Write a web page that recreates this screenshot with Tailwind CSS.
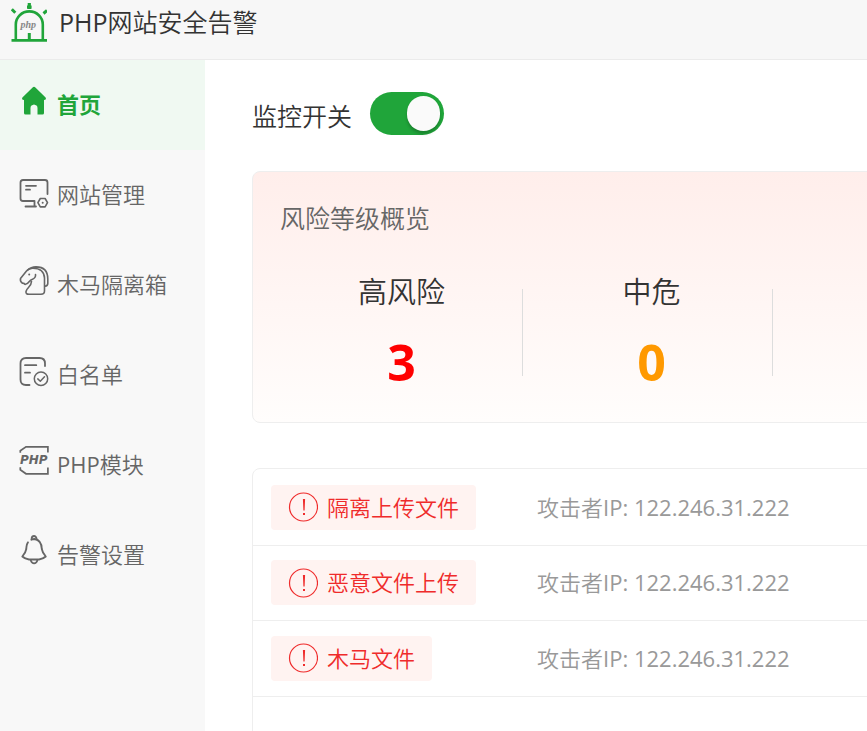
<!DOCTYPE html>
<html lang="zh-CN">
<head>
  <meta charset="UTF-8" />
  <meta name="viewport" content="width=device-width, initial-scale=1.0" />
  <title>PHP网站安全告警</title>
  <script src="https://cdn.jsdelivr.net/npm/@tailwindcss/browser@4"></script>
</head>
<body class="flex flex-col h-screen overflow-hidden bg-white text-[#333] font-[350] font-['Open_Sans','Noto_Sans_CJK_SC',sans-serif]">

  <header class="flex items-center gap-3 h-[60px] shrink-0 pl-[11px] pb-4 bg-[#f7f7f7] border-b border-[#ebebeb]">
    <svg class="w-9 h-10 shrink-0" viewBox="0 0 36 40" fill="none" stroke="#20a53a">
      <path stroke-width="2.600" d="M4.800 38V22.500a13.400 13 0 0 1 27 0V38" />
      <path stroke-width="2.800" d="M0.500 38.300H36" />
      <path stroke-width="3" d="M18.300 31v8" />
      <path stroke-width="3.200" d="M18.300 1v6M16 5.200h4.600" />
      <path stroke-width="3" d="M.8 7.300l3.500 3.500M36 8.500l-3.500 3" />
      <text x="9.500" y="26" font-family="Liberation Serif" font-style="italic" font-weight="bold" font-size="10" fill="#888" stroke="none">php</text>
    </svg>
    <h1 class="text-[25px] leading-9"><span class="font-normal">PHP</span>网站安全告警</h1>
  </header>

  <div class="flex flex-1 min-h-0">
    <nav class="w-[205px] shrink-0 bg-[#f8f8f8] text-[22px] text-[#666]">
      <a href="#" class="flex items-center gap-2 h-[90px] pl-[19px] pb-0.5 bg-[#f0f9f2] text-[#20a53a] font-bold">
        <svg class="w-[30px] h-[30px] mb-2" viewBox="0 0 30 30" fill="currentColor">
          <path d="M13.600 2.400q1.400-1.300 2.800 0L26.600 12.600q1.200 2.400-1.600 2.400V28q0 1.500-1.500 1.500H18.500V23q0-2-1-2.600l-2.500-1-2.500 1q-1 .6-1 2.600v6.500H6.500Q5 29.500 5 28V15Q2.200 15 3.400 12.600z" />
        </svg>
        <span>首页</span>
      </a>
      <a href="#" class="flex items-center gap-2 h-[90px] pl-[19px] pb-0.5">
        <svg class="w-[30px] h-[30px] mb-2 overflow-visible" viewBox="0 0 30 30" fill="none" stroke="currentColor" stroke-width="1.800" stroke-linecap="round" stroke-linejoin="round">
          <path d="M28.500 19V7.500q0-2.500-2.500-2.500H4q-2.500 0-2.500 2.500V23.500q0 2.500 2.500 2.500H15.500V31" />
          <path d="M6.500 31.500h10.500M7 10.800h10M7 14.700h4" />
          <path stroke-width="1.600" d="M21.300 23.500h4.800l2.400 4.200-2.400 4.200h-4.800l-2.400-4.200z" />
          <circle cx="23.700" cy="27.700" r="1" fill="currentColor" stroke="none" />
        </svg>
        <span>网站管理</span>
      </a>
      <a href="#" class="flex items-center gap-2 h-[90px] pl-[19px] pb-0.5">
        <svg class="w-[30px] h-[30px] mb-2 overflow-visible" viewBox="0 -1 30 30" fill="none" stroke="currentColor" stroke-width="1.600" stroke-linecap="round" stroke-linejoin="round">
          <path d="M16.500 8.500q.5 3-3 4.800Q11.500 14 10.300 15.500Q8.500 18 6.500 18.300Q5.500 18.500 5 17.400L3.500 17.200Q.8 15.500 1.500 12.500L7.500 5Q10 2.300 13.500 2.200Q25 2 25.500 12V25q0 3.300-3.500 3.300H10Q6.500 28.300 7 25.500Q7.500 23.500 9.500 21.500Q12.300 19 12.500 15.500" />
          <path d="M8.500 4Q12 1 17 .9Q28.800 1 28.800 13V17.500q0 2.300-2.800 2.800" />
          <circle cx="10.200" cy="8.600" r="1" fill="currentColor" stroke="none" />
        </svg>
        <span>木马隔离箱</span>
      </a>
      <a href="#" class="flex items-center gap-2 h-[90px] pl-[19px] pb-0.5">
        <svg class="w-[30px] h-[30px] mb-2 overflow-visible" viewBox="0 0 30 30" fill="none" stroke="currentColor" stroke-width="1.800" stroke-linecap="round" stroke-linejoin="round">
          <path d="M26 11V8.500Q26 3 20.500 3H7Q1.500 3 1.500 8.500V24.500Q1.500 30 7 30H10.500" />
          <path d="M6 10.200h11.300M6 17.700h5" />
          <circle cx="22" cy="23.700" r="6.700" stroke-width="1.500" />
          <path stroke-width="1.500" d="M18.800 23.900l2.500 2.300 4.200-4.500" />
        </svg>
        <span>白名单</span>
      </a>
      <a href="#" class="flex items-center gap-2 h-[90px] pl-[19px] pb-0.5">
        <svg class="w-[30px] h-[30px] mb-2 overflow-visible" viewBox="0 -1 30 30" fill="none" stroke="currentColor" stroke-width="1.700">
          <path d="M1.300 6.800V4.800L7 .9H28.900V6.500M1.300 21.300V23.800L7 27.800H28.900V21.500" />
          <text x="1" y="18" font-family="DejaVu Sans" font-weight="bold" font-style="italic" font-size="12" fill="currentColor" stroke="none">PHP</text>
        </svg>
        <span><span class="font-normal">PHP</span>模块</span>
      </a>
      <a href="#" class="flex items-center gap-2 h-[90px] pl-[19px] pb-0.5">
        <svg class="w-[30px] h-[30px] mb-2" viewBox="0 0 30 30" fill="none" stroke="currentColor" stroke-width="1.800" stroke-linecap="round" stroke-linejoin="round">
          <path d="M9 7.300Q7.500 9 7.300 14Q6.800 17.500 3.300 21.500Q6 24 10 24.500H20Q24 24 26.800 21.500Q23.300 17.500 22.800 14Q22.500 5 15.500 4Q13.500 4 12.300 4.800" />
          <path d="M12.600 3.500Q13 1 15 1t2.600 2.800M11.800 25.500q1 2.800 3.300 2.800t3.200-2.800" />
        </svg>
        <span>告警设置</span>
      </a>
    </nav>

    <main class="flex-1 min-w-0 overflow-hidden pl-[47px] pt-8">
      <div class="flex items-center gap-[18px]">
        <label for="monitor" class="pt-1 text-[25px] leading-9">监控开关</label>
        <input type="checkbox" id="monitor" role="switch" checked class="appearance-none flex items-center justify-start w-[74px] h-[43px] px-1 rounded-full bg-[#ddd] cursor-pointer checked:justify-end checked:bg-[#20a53a] before:content-[''] before:w-[33px] before:h-[35px] before:rounded-full before:bg-[#fafafa] before:shadow-[0_3px_3px_rgba(0,0,0,0.2)]" />
      </div>

      <section class="h-[252px] mt-9 -mr-4 pl-5 pt-7 border border-[#eee] rounded-lg bg-linear-to-b from-[#ffeeeb] to-[#fffdfc]">
        <h2 class="pl-[7px] text-[25px] leading-9 text-[#666]">风险等级概览</h2>
        <div class="flex mt-7 text-center">
          <div class="relative w-[250px] shrink-0 pl-[7px] after:absolute after:right-0 after:top-[25px] after:h-[87px] after:w-px after:bg-[#ddd]">
            <div class="pt-2 text-[29px] leading-10">高风险</div>
            <div class="mt-6 text-[50px] leading-[52px] font-bold text-[#f00]">3</div>
          </div>
          <div class="relative w-[250px] shrink-0 pl-[7px] after:absolute after:right-0 after:top-[25px] after:h-[87px] after:w-px after:bg-[#ddd]">
            <div class="pt-2 text-[29px] leading-10">中危</div>
            <div class="mt-6 text-[50px] leading-[52px] font-bold text-[#f90]">0</div>
          </div>
        </div>
      </section>

      <section class="h-screen mt-[45px] -mr-4 pt-px border border-[#eee] rounded-lg text-[22px]">
        <table class="w-full">
          <tbody>
            <tr class="h-[75px] border-b border-[#eee]">
              <td class="w-[284px] pl-[18px]">
                <span class="inline-flex items-center gap-[9px] h-[45px] px-[17px] rounded bg-[#fff3f1] text-[#ef2b2b] align-middle">
                  <svg class="w-[30px] h-[30px]" viewBox="0 0 30 30"><circle cx="15.500" cy="15" r="14" fill="none" stroke="currentColor" stroke-width="1.200" /><path fill="currentColor" d="M14.900 7h2.200l-.5 11.500h-1.200zM15 21h2v2h-2z" /></svg>
                  隔离上传文件
                </span>
              </td>
              <td class="text-[#999]">攻击者<span class="font-normal">IP: 122.246.31.222</span></td>
            </tr>
            <tr class="h-[75px] border-b border-[#eee]">
              <td class="w-[284px] pl-[18px]">
                <span class="inline-flex items-center gap-[9px] h-[45px] px-[17px] rounded bg-[#fff3f1] text-[#ef2b2b] align-middle">
                  <svg class="w-[30px] h-[30px]" viewBox="0 0 30 30"><circle cx="15.500" cy="15" r="14" fill="none" stroke="currentColor" stroke-width="1.200" /><path fill="currentColor" d="M14.900 7h2.200l-.5 11.500h-1.200zM15 21h2v2h-2z" /></svg>
                  恶意文件上传
                </span>
              </td>
              <td class="text-[#999]">攻击者<span class="font-normal">IP: 122.246.31.222</span></td>
            </tr>
            <tr class="h-[76px] border-b border-[#eee]">
              <td class="w-[284px] pl-[18px]">
                <span class="inline-flex items-center gap-[9px] h-[45px] px-[17px] rounded bg-[#fff3f1] text-[#ef2b2b] align-middle">
                  <svg class="w-[30px] h-[30px]" viewBox="0 0 30 30"><circle cx="15.500" cy="15" r="14" fill="none" stroke="currentColor" stroke-width="1.200" /><path fill="currentColor" d="M14.900 7h2.200l-.5 11.500h-1.200zM15 21h2v2h-2z" /></svg>
                  木马文件
                </span>
              </td>
              <td class="text-[#999]">攻击者<span class="font-normal">IP: 122.246.31.222</span></td>
            </tr>
          </tbody>
        </table>
      </section>
    </main>
  </div>

</body>
</html>
